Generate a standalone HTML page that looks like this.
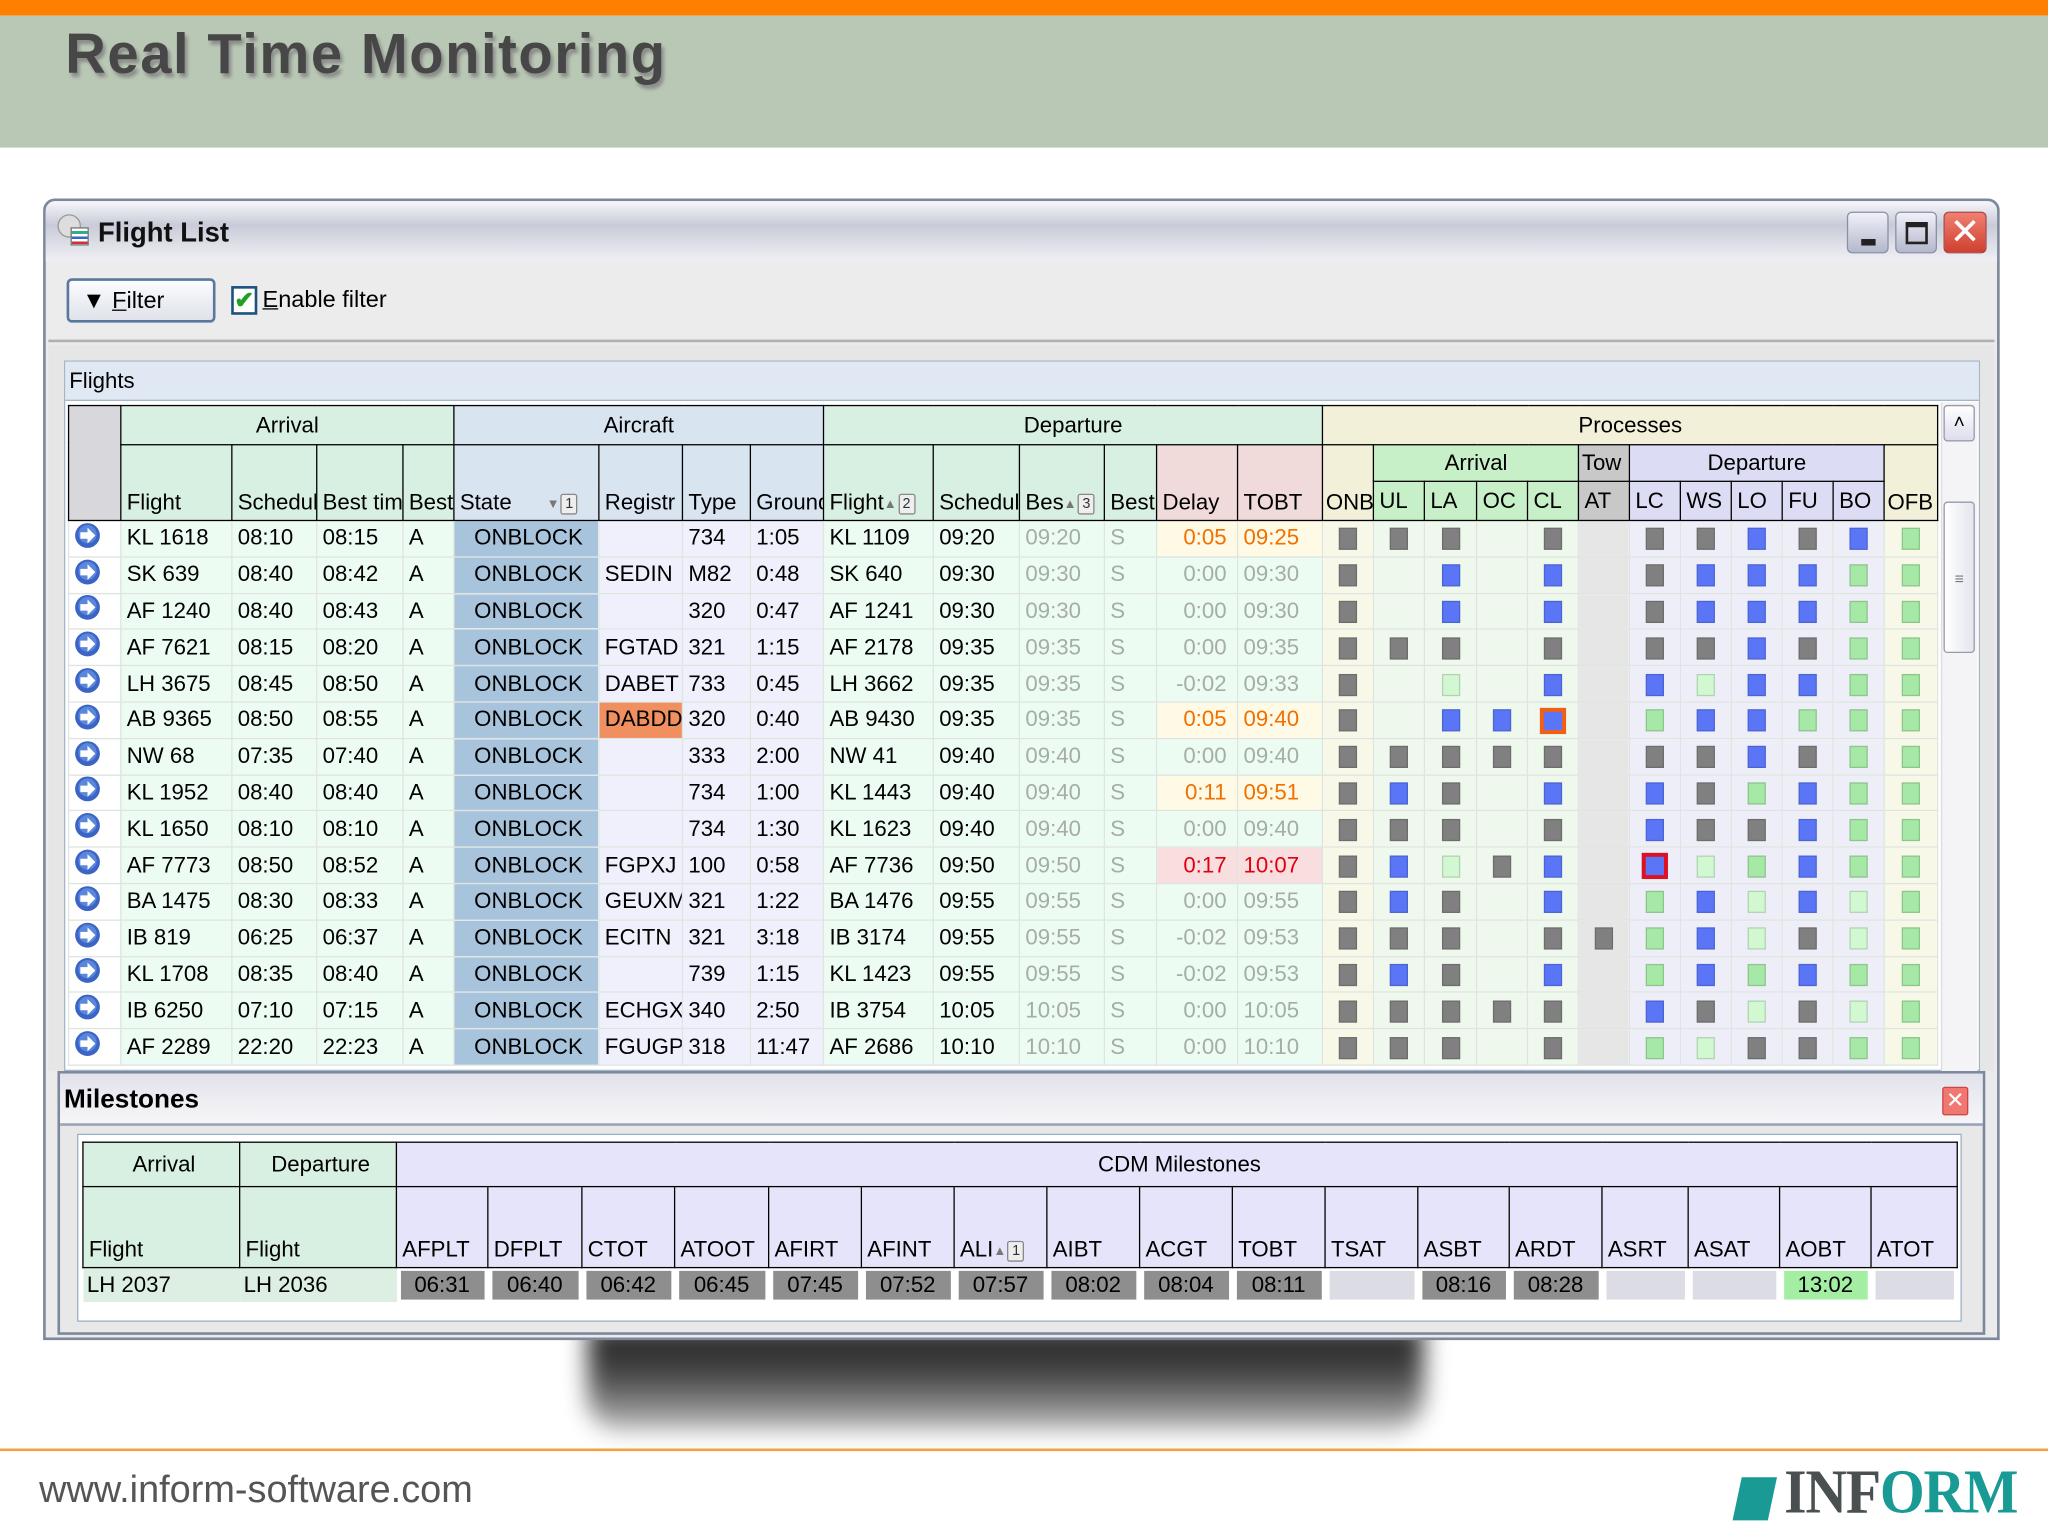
<!DOCTYPE html>
<html><head><meta charset="utf-8"><style>
*{box-sizing:border-box;margin:0;padding:0}
html,body{width:2048px;height:1536px;overflow:hidden;background:#fff}
#s{position:absolute;left:0;top:0;width:1568px;height:1176px;transform:scale(1.306122);transform-origin:0 0;font-family:"Liberation Sans",sans-serif;}
.abs{position:absolute}
table{border-collapse:collapse;table-layout:fixed;position:absolute}
td,th{font-weight:normal;font-size:17px;white-space:nowrap;overflow:hidden;text-align:left;padding:0 0 0 4px;color:#000}
#ft th{border:1.5px solid #000;vertical-align:middle}
#ft th.lf{vertical-align:bottom;padding-bottom:3px}
#ft th.c{text-align:center;padding:0}
#ft td{border:1.5px solid #dfe4e0;height:27.8px}
#ft tbody tr{height:27.8px}
.hA{background:#d8f0e2}.hC{background:#d8e4f0}.hP{background:#f2f0d8}.hPa{background:#c8f0c8}.hT{background:#c8c8c8}.hPd{background:#dcdcf4}.hR{background:#f0dada}
.gr{color:#a6aca6}
.or{color:#f07000;background:#fffae6}
.rd{color:#e00010;background:#f8dede}
td.r{text-align:right;padding:0 8px 0 0}
td.q{padding:0;text-align:center}
i{display:inline-block;width:14px;height:17px;vertical-align:middle;border:1px solid rgba(0,0,0,.15)}
i.g{background:#808080}i.b{background:#5a76f6}i.l{background:#a6e8a6}i.p{background:#d2f8d2}
.srt{display:inline-block;font-size:10px;color:#777;vertical-align:middle}
.srt b{display:inline-block;width:13px;height:16px;border:1px solid #888;background:#eee;font-size:11px;font-weight:normal;text-align:center;line-height:14px;border-radius:2px;margin-left:1px;color:#333}
#mt th{border:1.5px solid #000;background:#e6e4fa}
#mt th.lf{vertical-align:bottom;padding-bottom:3px}
#mt td{height:26px;padding:2px 3px}
#mt td span{display:block;height:22px;line-height:22px;text-align:center;background:#8e8e8e;font-size:17px}
</style></head><body><div id="s">
<svg width="0" height="0" style="position:absolute"><symbol id="ar" viewBox="0 0 20 20"><circle cx="10" cy="10" r="9.5" fill="#3c64c4"/><circle cx="10" cy="9" r="7" fill="#5a86dc"/><path d="M4.5 7.5h5.5v-3.5l6 6-6 6v-3.5h-5.5z" fill="#fff"/></symbol></svg>
<!-- header -->
<div class="abs" style="left:0;top:0;width:1568px;height:12px;background:#ff8000"></div>
<div class="abs" style="left:0;top:12px;width:1568px;height:101px;background:#b9c8b4"></div>
<div class="abs" style="left:50px;top:18px;font-size:43px;font-weight:bold;color:#474747;text-shadow:2px 3px 3px #8a8a8a;letter-spacing:1.2px">Real Time Monitoring</div>
<!-- shadow -->
<div class="abs" style="left:450px;top:1015px;width:640px;height:80px;background:linear-gradient(#222,#444 45%,#bbb);filter:blur(9px);border-radius:0 0 24px 24px"></div>
<!-- window -->
<div class="abs" style="left:33px;top:152px;width:1498px;height:874px;border:2px solid #7c889c;border-radius:9px 9px 0 0;background:#ebebeb"></div>
<div class="abs" style="left:35px;top:154px;width:1494px;height:46px;border-radius:8px 8px 0 0;background:linear-gradient(#f6f6fa,#c8ccd8 40%,#f0f0f4)"></div>
<div class="abs" style="left:44px;top:164px;width:26px;height:26px;"><div style="position:absolute;left:0;top:0;width:18px;height:18px;border-radius:50%;background:#ddd;border:1px solid #999"></div><div style="position:absolute;left:10px;top:10px;width:14px;height:14px;background:#fff;border:1px solid #777;background:linear-gradient(#fff 0 2px,#3a8 2px 4px,#fff 4px 6px,#36c 6px 8px,#fff 8px 10px,#c33 10px 12px,#fff 12px)"></div></div>
<div class="abs" style="left:75px;top:167px;font-size:21px;font-weight:bold;color:#111">Flight List</div>
<div class="abs" style="left:1414px;top:162px;width:32px;height:32px;border:1px solid #8890a8;border-radius:4px;background:linear-gradient(#f0f0f8,#b4b8cc)"><div style="position:absolute;left:10px;top:20px;width:11px;height:5px;background:#222"></div></div>
<div class="abs" style="left:1451px;top:162px;width:32px;height:32px;border:1px solid #8890a8;border-radius:4px;background:linear-gradient(#f0f0f8,#b4b8cc)"><div style="position:absolute;left:7px;top:7px;width:17px;height:17px;border:2px solid #222;border-top-width:4px"></div></div>
<div class="abs" style="left:1488px;top:162px;width:33px;height:32px;border:1px solid #a44;border-radius:4px;background:linear-gradient(#f08070,#d04030);color:#fff;font-size:28px;text-align:center;line-height:30px">✕</div>
<div class="abs" style="left:37px;top:200px;width:1490px;height:62px;background:#ececec;border-bottom:2px solid #b0b0b0"></div>
<div class="abs" style="left:51px;top:213px;width:114px;height:34px;border:2px solid #5878a0;border-radius:4px;background:linear-gradient(#fcfcff,#dfe2ea);font-size:18px;line-height:30px;padding-left:10px">▼ <u>F</u>ilter</div>
<div class="abs" style="left:177px;top:219px;width:20px;height:22px;border:2px solid #1c5180;background:#fff;color:#22a022;font-size:18px;line-height:18px;text-align:center;font-weight:bold">✔</div>
<div class="abs" style="left:201px;top:219px;font-size:18px"><u>E</u>nable filter</div>
<div class="abs" style="left:37px;top:264px;width:1490px;height:556px;background:#e6e6e6"></div>
<div class="abs" style="left:49px;top:276px;width:1467px;height:544px;border:1px solid #a4b6c8;background:#fff"></div>
<div class="abs" style="left:50px;top:277px;width:1465px;height:30px;background:#dfe8f3;border-bottom:1px solid #a4b6c8;font-size:17px;line-height:30px;padding-left:3px">Flights</div>
<!-- scrollbar -->
<div class="abs" style="left:1486px;top:308px;width:28px;height:512px;background:#f4f4f6;border-left:1px solid #ddd"></div>
<div class="abs" style="left:1488px;top:310px;width:24px;height:28px;border:1px solid #99a;border-radius:3px;background:linear-gradient(#fff,#dde);text-align:center;font-size:15px;line-height:26px">˄</div>
<div class="abs" style="left:1488px;top:384px;width:24px;height:116px;border:1px solid #99a;border-radius:3px;background:linear-gradient(90deg,#fff,#e4e6ee);text-align:center;font-size:12px;line-height:116px;color:#777">≡</div>

<table id="ft" style="left:52px;top:310px;width:1431px">
<colgroup><col style="width:40px;background:#fff"><col style="width:85px;background:#edfcf3"><col style="width:65px;background:#edfcf3"><col style="width:66px;background:#edfcf3"><col style="width:39px;background:#edfcf3"><col style="width:111px;background:#a8c4dc"><col style="width:64px;background:#eff0fb"><col style="width:52px;background:#eff0fb"><col style="width:56px;background:#eff0fb"><col style="width:84px;background:#ecfcf3"><col style="width:66px;background:#ecfcf3"><col style="width:65px;background:#ecfcf3"><col style="width:40px;background:#ecfcf3"><col style="width:62px;background:#ecfcf3"><col style="width:65px;background:#ecfcf3"><col style="width:39px;background:#f8f8e8"><col style="width:39px;background:#eef8ec"><col style="width:40px;background:#eef8ec"><col style="width:39px;background:#eef8ec"><col style="width:39px;background:#eef8ec"><col style="width:39px;background:#e6e6e6"><col style="width:39px;background:#eeeef8"><col style="width:39px;background:#eeeef8"><col style="width:39px;background:#eeeef8"><col style="width:39px;background:#eeeef8"><col style="width:39px;background:#eeeef8"><col style="width:41px;background:#f8f8e8"></colgroup>
<thead>
<tr style="height:30px"><th rowspan="3" style="background:#d8d8dc"></th><th colspan="4" class="c hA">Arrival</th><th colspan="4" class="c hC">Aircraft</th><th colspan="6" class="c hA">Departure</th><th colspan="12" class="c hP">Processes</th></tr>
<tr style="height:28px"><th rowspan="2" class="lf hA">Flight</th><th rowspan="2" class="lf hA">Schedul</th><th rowspan="2" class="lf hA">Best tim</th><th rowspan="2" class="lf hA">Best</th><th rowspan="2" class="lf hC">State <span class="srt" style="margin-left:22px">▼<b>1</b></span></th><th rowspan="2" class="lf hC">Registr</th><th rowspan="2" class="lf hC">Type</th><th rowspan="2" class="lf hC">Ground</th><th rowspan="2" class="lf hA">Flight<span class="srt">▲<b>2</b></span></th><th rowspan="2" class="lf hA">Schedul</th><th rowspan="2" class="lf hA">Bes<span class="srt">▲<b>3</b></span></th><th rowspan="2" class="lf hA">Best</th><th rowspan="2" class="lf hR">Delay</th><th rowspan="2" class="lf hR">TOBT</th><th rowspan="2" class="lf hP" style="padding-left:2px">ONB</th><th colspan="4" class="c hPa">Arrival</th><th class="hT" style="padding-left:2px">Tow</th><th colspan="5" class="c hPd">Departure</th><th rowspan="2" class="lf hP" style="padding-left:2px">OFB</th></tr>
<tr style="height:30px"><th class="hPa">UL</th><th class="hPa">LA</th><th class="hPa">OC</th><th class="hPa">CL</th><th class="hT">AT</th><th class="hPd">LC</th><th class="hPd">WS</th><th class="hPd">LO</th><th class="hPd">FU</th><th class="hPd">BO</th></tr>
</thead>
<tbody>
<tr><td><svg width="20" height="20"><use href="#ar"/></svg></td><td>KL 1618</td><td>08:10</td><td>08:15</td><td>A</td><td style="padding-left:15px">ONBLOCK</td><td></td><td>734</td><td>1:05</td><td>KL 1109</td><td>09:20</td><td class="gr">09:20</td><td class="gr">S</td><td class="r or">0:05</td><td class="or">09:25</td><td class="q"><i class="g"></i></td><td class="q"><i class="g"></i></td><td class="q"><i class="g"></i></td><td class="q"></td><td class="q"><i class="g"></i></td><td class="q"></td><td class="q"><i class="g"></i></td><td class="q"><i class="g"></i></td><td class="q"><i class="b"></i></td><td class="q"><i class="g"></i></td><td class="q"><i class="b"></i></td><td class="q"><i class="l"></i></td></tr>
<tr><td><svg width="20" height="20"><use href="#ar"/></svg></td><td>SK 639</td><td>08:40</td><td>08:42</td><td>A</td><td style="padding-left:15px">ONBLOCK</td><td>SEDIN</td><td>M82</td><td>0:48</td><td>SK 640</td><td>09:30</td><td class="gr">09:30</td><td class="gr">S</td><td class="r gr">0:00</td><td class="gr">09:30</td><td class="q"><i class="g"></i></td><td class="q"></td><td class="q"><i class="b"></i></td><td class="q"></td><td class="q"><i class="b"></i></td><td class="q"></td><td class="q"><i class="g"></i></td><td class="q"><i class="b"></i></td><td class="q"><i class="b"></i></td><td class="q"><i class="b"></i></td><td class="q"><i class="l"></i></td><td class="q"><i class="l"></i></td></tr>
<tr><td><svg width="20" height="20"><use href="#ar"/></svg></td><td>AF 1240</td><td>08:40</td><td>08:43</td><td>A</td><td style="padding-left:15px">ONBLOCK</td><td></td><td>320</td><td>0:47</td><td>AF 1241</td><td>09:30</td><td class="gr">09:30</td><td class="gr">S</td><td class="r gr">0:00</td><td class="gr">09:30</td><td class="q"><i class="g"></i></td><td class="q"></td><td class="q"><i class="b"></i></td><td class="q"></td><td class="q"><i class="b"></i></td><td class="q"></td><td class="q"><i class="g"></i></td><td class="q"><i class="b"></i></td><td class="q"><i class="b"></i></td><td class="q"><i class="b"></i></td><td class="q"><i class="l"></i></td><td class="q"><i class="l"></i></td></tr>
<tr><td><svg width="20" height="20"><use href="#ar"/></svg></td><td>AF 7621</td><td>08:15</td><td>08:20</td><td>A</td><td style="padding-left:15px">ONBLOCK</td><td>FGTAD</td><td>321</td><td>1:15</td><td>AF 2178</td><td>09:35</td><td class="gr">09:35</td><td class="gr">S</td><td class="r gr">0:00</td><td class="gr">09:35</td><td class="q"><i class="g"></i></td><td class="q"><i class="g"></i></td><td class="q"><i class="g"></i></td><td class="q"></td><td class="q"><i class="g"></i></td><td class="q"></td><td class="q"><i class="g"></i></td><td class="q"><i class="g"></i></td><td class="q"><i class="b"></i></td><td class="q"><i class="g"></i></td><td class="q"><i class="l"></i></td><td class="q"><i class="l"></i></td></tr>
<tr><td><svg width="20" height="20"><use href="#ar"/></svg></td><td>LH 3675</td><td>08:45</td><td>08:50</td><td>A</td><td style="padding-left:15px">ONBLOCK</td><td>DABET</td><td>733</td><td>0:45</td><td>LH 3662</td><td>09:35</td><td class="gr">09:35</td><td class="gr">S</td><td class="r gr">-0:02</td><td class="gr">09:33</td><td class="q"><i class="g"></i></td><td class="q"></td><td class="q"><i class="p"></i></td><td class="q"></td><td class="q"><i class="b"></i></td><td class="q"></td><td class="q"><i class="b"></i></td><td class="q"><i class="p"></i></td><td class="q"><i class="b"></i></td><td class="q"><i class="b"></i></td><td class="q"><i class="l"></i></td><td class="q"><i class="l"></i></td></tr>
<tr><td><svg width="20" height="20"><use href="#ar"/></svg></td><td>AB 9365</td><td>08:50</td><td>08:55</td><td>A</td><td style="padding-left:15px">ONBLOCK</td><td style="background:#f09060">DABDD</td><td>320</td><td>0:40</td><td>AB 9430</td><td>09:35</td><td class="gr">09:35</td><td class="gr">S</td><td class="r or">0:05</td><td class="or">09:40</td><td class="q"><i class="g"></i></td><td class="q"></td><td class="q"><i class="b"></i></td><td class="q"><i class="b"></i></td><td class="q"><i class="b" style="border:3px solid #f06010;width:20px;height:20px"></i></td><td class="q"></td><td class="q"><i class="l"></i></td><td class="q"><i class="b"></i></td><td class="q"><i class="b"></i></td><td class="q"><i class="l"></i></td><td class="q"><i class="l"></i></td><td class="q"><i class="l"></i></td></tr>
<tr><td><svg width="20" height="20"><use href="#ar"/></svg></td><td>NW 68</td><td>07:35</td><td>07:40</td><td>A</td><td style="padding-left:15px">ONBLOCK</td><td></td><td>333</td><td>2:00</td><td>NW 41</td><td>09:40</td><td class="gr">09:40</td><td class="gr">S</td><td class="r gr">0:00</td><td class="gr">09:40</td><td class="q"><i class="g"></i></td><td class="q"><i class="g"></i></td><td class="q"><i class="g"></i></td><td class="q"><i class="g"></i></td><td class="q"><i class="g"></i></td><td class="q"></td><td class="q"><i class="g"></i></td><td class="q"><i class="g"></i></td><td class="q"><i class="b"></i></td><td class="q"><i class="g"></i></td><td class="q"><i class="l"></i></td><td class="q"><i class="l"></i></td></tr>
<tr><td><svg width="20" height="20"><use href="#ar"/></svg></td><td>KL 1952</td><td>08:40</td><td>08:40</td><td>A</td><td style="padding-left:15px">ONBLOCK</td><td></td><td>734</td><td>1:00</td><td>KL 1443</td><td>09:40</td><td class="gr">09:40</td><td class="gr">S</td><td class="r or">0:11</td><td class="or">09:51</td><td class="q"><i class="g"></i></td><td class="q"><i class="b"></i></td><td class="q"><i class="g"></i></td><td class="q"></td><td class="q"><i class="b"></i></td><td class="q"></td><td class="q"><i class="b"></i></td><td class="q"><i class="g"></i></td><td class="q"><i class="l"></i></td><td class="q"><i class="b"></i></td><td class="q"><i class="l"></i></td><td class="q"><i class="l"></i></td></tr>
<tr><td><svg width="20" height="20"><use href="#ar"/></svg></td><td>KL 1650</td><td>08:10</td><td>08:10</td><td>A</td><td style="padding-left:15px">ONBLOCK</td><td></td><td>734</td><td>1:30</td><td>KL 1623</td><td>09:40</td><td class="gr">09:40</td><td class="gr">S</td><td class="r gr">0:00</td><td class="gr">09:40</td><td class="q"><i class="g"></i></td><td class="q"><i class="g"></i></td><td class="q"><i class="g"></i></td><td class="q"></td><td class="q"><i class="g"></i></td><td class="q"></td><td class="q"><i class="b"></i></td><td class="q"><i class="g"></i></td><td class="q"><i class="g"></i></td><td class="q"><i class="b"></i></td><td class="q"><i class="l"></i></td><td class="q"><i class="l"></i></td></tr>
<tr><td><svg width="20" height="20"><use href="#ar"/></svg></td><td>AF 7773</td><td>08:50</td><td>08:52</td><td>A</td><td style="padding-left:15px">ONBLOCK</td><td>FGPXJ</td><td>100</td><td>0:58</td><td>AF 7736</td><td>09:50</td><td class="gr">09:50</td><td class="gr">S</td><td class="r rd">0:17</td><td class="rd">10:07</td><td class="q"><i class="g"></i></td><td class="q"><i class="b"></i></td><td class="q"><i class="p"></i></td><td class="q"><i class="g"></i></td><td class="q"><i class="b"></i></td><td class="q"></td><td class="q"><i class="b" style="border:3px solid #e01020;width:20px;height:20px"></i></td><td class="q"><i class="p"></i></td><td class="q"><i class="l"></i></td><td class="q"><i class="b"></i></td><td class="q"><i class="l"></i></td><td class="q"><i class="l"></i></td></tr>
<tr><td><svg width="20" height="20"><use href="#ar"/></svg></td><td>BA 1475</td><td>08:30</td><td>08:33</td><td>A</td><td style="padding-left:15px">ONBLOCK</td><td>GEUXM</td><td>321</td><td>1:22</td><td>BA 1476</td><td>09:55</td><td class="gr">09:55</td><td class="gr">S</td><td class="r gr">0:00</td><td class="gr">09:55</td><td class="q"><i class="g"></i></td><td class="q"><i class="b"></i></td><td class="q"><i class="g"></i></td><td class="q"></td><td class="q"><i class="b"></i></td><td class="q"></td><td class="q"><i class="l"></i></td><td class="q"><i class="b"></i></td><td class="q"><i class="p"></i></td><td class="q"><i class="b"></i></td><td class="q"><i class="p"></i></td><td class="q"><i class="l"></i></td></tr>
<tr><td><svg width="20" height="20"><use href="#ar"/></svg></td><td>IB 819</td><td>06:25</td><td>06:37</td><td>A</td><td style="padding-left:15px">ONBLOCK</td><td>ECITN</td><td>321</td><td>3:18</td><td>IB 3174</td><td>09:55</td><td class="gr">09:55</td><td class="gr">S</td><td class="r gr">-0:02</td><td class="gr">09:53</td><td class="q"><i class="g"></i></td><td class="q"><i class="g"></i></td><td class="q"><i class="g"></i></td><td class="q"></td><td class="q"><i class="g"></i></td><td class="q"><i class="g"></i></td><td class="q"><i class="l"></i></td><td class="q"><i class="b"></i></td><td class="q"><i class="p"></i></td><td class="q"><i class="g"></i></td><td class="q"><i class="p"></i></td><td class="q"><i class="l"></i></td></tr>
<tr><td><svg width="20" height="20"><use href="#ar"/></svg></td><td>KL 1708</td><td>08:35</td><td>08:40</td><td>A</td><td style="padding-left:15px">ONBLOCK</td><td></td><td>739</td><td>1:15</td><td>KL 1423</td><td>09:55</td><td class="gr">09:55</td><td class="gr">S</td><td class="r gr">-0:02</td><td class="gr">09:53</td><td class="q"><i class="g"></i></td><td class="q"><i class="b"></i></td><td class="q"><i class="g"></i></td><td class="q"></td><td class="q"><i class="b"></i></td><td class="q"></td><td class="q"><i class="l"></i></td><td class="q"><i class="b"></i></td><td class="q"><i class="l"></i></td><td class="q"><i class="b"></i></td><td class="q"><i class="l"></i></td><td class="q"><i class="l"></i></td></tr>
<tr><td><svg width="20" height="20"><use href="#ar"/></svg></td><td>IB 6250</td><td>07:10</td><td>07:15</td><td>A</td><td style="padding-left:15px">ONBLOCK</td><td>ECHGX</td><td>340</td><td>2:50</td><td>IB 3754</td><td>10:05</td><td class="gr">10:05</td><td class="gr">S</td><td class="r gr">0:00</td><td class="gr">10:05</td><td class="q"><i class="g"></i></td><td class="q"><i class="g"></i></td><td class="q"><i class="g"></i></td><td class="q"><i class="g"></i></td><td class="q"><i class="g"></i></td><td class="q"></td><td class="q"><i class="b"></i></td><td class="q"><i class="g"></i></td><td class="q"><i class="p"></i></td><td class="q"><i class="g"></i></td><td class="q"><i class="p"></i></td><td class="q"><i class="l"></i></td></tr>
<tr><td><svg width="20" height="20"><use href="#ar"/></svg></td><td>AF 2289</td><td>22:20</td><td>22:23</td><td>A</td><td style="padding-left:15px">ONBLOCK</td><td>FGUGP</td><td>318</td><td>11:47</td><td>AF 2686</td><td>10:10</td><td class="gr">10:10</td><td class="gr">S</td><td class="r gr">0:00</td><td class="gr">10:10</td><td class="q"><i class="g"></i></td><td class="q"><i class="g"></i></td><td class="q"><i class="g"></i></td><td class="q"></td><td class="q"><i class="g"></i></td><td class="q"></td><td class="q"><i class="l"></i></td><td class="q"><i class="p"></i></td><td class="q"><i class="g"></i></td><td class="q"><i class="g"></i></td><td class="q"><i class="l"></i></td><td class="q"><i class="l"></i></td></tr>
</tbody></table>

<!-- milestones -->
<div class="abs" style="left:44px;top:820px;width:1476px;height:202px;border:2px solid #7c889c;background:#e8e8e8"></div>
<div class="abs" style="left:46px;top:822px;width:1472px;height:40px;background:linear-gradient(#e2e2ec,#f6f6f8);border-bottom:2px solid #9aa4b8;font-size:20px;font-weight:bold;line-height:40px;padding-left:3px">Milestones</div>
<div class="abs" style="left:1487px;top:832px;width:20px;height:22px;border:1px solid #c44;border-radius:2px;background:#f07870;color:#fff;font-size:17px;text-align:center;line-height:20px">✕</div>
<div class="abs" style="left:59px;top:868px;width:1443px;height:144px;border:1px solid #98b0c8;background:#fff"></div>
<table id="mt" style="left:63px;top:874px;width:1435px">
<colgroup><col style="width:120px"><col style="width:120px"><col style="width:70px"><col style="width:72px"><col style="width:71px"><col style="width:72px"><col style="width:71px"><col style="width:71px"><col style="width:71px"><col style="width:71px"><col style="width:71px"><col style="width:71px"><col style="width:71px"><col style="width:70px"><col style="width:71px"><col style="width:66px"><col style="width:70px"><col style="width:70px"><col style="width:66px"></colgroup>
<tr style="height:34px"><th style="background:#d8f0e2;text-align:center">Arrival</th><th style="background:#d8f0e2;text-align:center">Departure</th><th colspan="17" style="text-align:center">CDM Milestones</th></tr>
<tr style="height:62px"><th class="lf" style="background:#d8f0e2">Flight</th><th class="lf" style="background:#d8f0e2">Flight</th><th class="lf">AFPLT</th><th class="lf">DFPLT</th><th class="lf">CTOT</th><th class="lf">ATOOT</th><th class="lf">AFIRT</th><th class="lf">AFINT</th><th class="lf">ALI<span class="srt">▲<b>1</b></span></th><th class="lf">AIBT</th><th class="lf">ACGT</th><th class="lf">TOBT</th><th class="lf">TSAT</th><th class="lf">ASBT</th><th class="lf">ARDT</th><th class="lf">ASRT</th><th class="lf">ASAT</th><th class="lf">AOBT</th><th class="lf">ATOT</th></tr>
<tr><td style="background:#dcefe2">LH 2037</td><td style="background:#dcefe2">LH 2036</td><td><span>06:31</span></td><td><span>06:40</span></td><td><span>06:42</span></td><td><span>06:45</span></td><td><span>07:45</span></td><td><span>07:52</span></td><td><span>07:57</span></td><td><span>08:02</span></td><td><span>08:04</span></td><td><span>08:11</span></td><td><span style="background:#dcdce4"></span></td><td><span>08:16</span></td><td><span>08:28</span></td><td><span style="background:#dcdce4"></span></td><td><span style="background:#dcdce4"></span></td><td><span style="background:#a4eea4">13:02</span></td><td><span style="background:#dcdce4"></span></td></tr>
</table>

<!-- footer -->
<div class="abs" style="left:0;top:1109px;width:1568px;height:2px;background:#f5a040"></div>
<div class="abs" style="left:30px;top:1125px;font-size:29px;color:#555">www.inform-software.com</div>
<div class="abs" style="left:1330px;top:1131px;width:27px;height:33px;background:#1a9a94;transform:skewX(-12deg)"></div>
<div class="abs" style="left:1366px;top:1118px;font-family:'Liberation Serif',serif;font-weight:bold;font-size:48px;line-height:50px;color:#4a5052;transform:scaleX(0.92);transform-origin:0 0;letter-spacing:-1px">INF<span style="color:#1a9a94">ORM</span></div>
</div></body></html>
